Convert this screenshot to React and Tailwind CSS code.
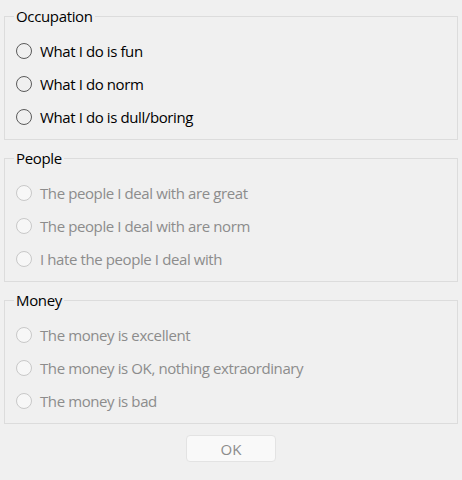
import React from "react";

const groups = [
  {
    title: "Occupation",
    enabled: true,
    items: ["What I do is fun", "What I do norm", "What I do is dull/boring"],
  },
  {
    title: "People",
    enabled: false,
    items: [
      "The people I deal with are great",
      "The people I deal with are norm",
      "I hate the people I deal with",
    ],
  },
  {
    title: "Money",
    enabled: false,
    items: [
      "The money is excellent",
      "The money is OK, nothing extraordinary",
      "The money is bad",
    ],
  },
];

function Radio({ enabled }) {
  return enabled ? (
    <span className="w-4 h-4 rounded-full border border-[#5a5a5a] bg-[#f0f0f0] shrink-0" />
  ) : (
    <span className="w-4 h-4 rounded-full border border-[#c8c8c8] bg-[#f7f7f7] shrink-0" />
  );
}

export default function App() {
  return (
    <div
      className="w-[462px] h-[480px] bg-[#f0f0f0] px-1 pt-[6px] flex flex-col gap-[8px] text-[15px] leading-[20px]"
      style={{ fontFamily: '"Open Sans", "Noto Sans", sans-serif' }}
    >
      {groups.map((g) => (
        <fieldset key={g.title} className="border border-[#dcdcdc] m-0 p-0 min-w-0">
          <legend className="ml-[9px] px-[2px] h-[20px] text-black text-[15px] leading-[20px] tracking-[-0.35px]">
            {g.title}
          </legend>
          <div className="pt-[8px] pb-[6px] pl-[11px] flex flex-col">
            {g.items.map((it) => (
              <label key={it} className="h-[33px] flex items-center gap-2">
                <Radio enabled={g.enabled} />
                <span
                  className={
                    g.enabled
                      ? "text-black tracking-[-0.4px]"
                      : "text-[#8c8c8c] tracking-[-0.4px]"
                  }
                >
                  {it}
                </span>
              </label>
            ))}
          </div>
        </fieldset>
      ))}
      <div className="flex justify-center pt-[3px]">
        <button className="w-[90px] h-[27px] rounded-[4px] border border-[#e3e3e3] bg-[#f9f9f9] text-[#8c8c8c] text-[15px] leading-[20px]">
          OK
        </button>
      </div>
    </div>
  );
}
